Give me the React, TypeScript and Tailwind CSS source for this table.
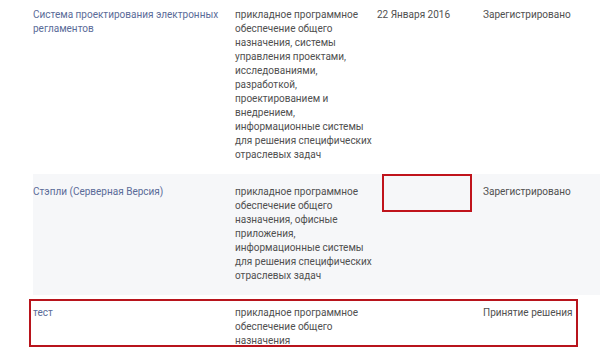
import React from 'react';

type Row = {
  name: string;
  kind: string;
  date: string;
  status: string;
  shaded?: boolean;
};

const rows: Row[] = [
  {
    name: 'Система проектирования электронных регламентов',
    kind: 'прикладное программное обеспечение общего назначения, системы управления проектами, исследованиями, разработкой, проектированием и внедрением, информационные системы для решения специфических отраслевых задач',
    date: '22 Января 2016',
    status: 'Зарегистрировано',
  },
  {
    name: 'Стэпли (Серверная Версия)',
    kind: 'прикладное программное обеспечение общего назначения, офисные приложения, информационные системы для решения специфических отраслевых задач',
    date: '',
    status: 'Зарегистрировано',
    shaded: true,
  },
  {
    name: 'тест',
    kind: 'прикладное программное обеспечение общего назначения',
    date: '',
    status: 'Принятие решения',
  },
];

const App: React.FC = () => {
  return (
    <div
      className="w-[600px] h-[356px] overflow-hidden bg-white relative"
      style={{ fontFamily: 'Roboto, "Noto Sans", sans-serif' }}
    >
      <div className="ml-[33px] -mt-[3px] text-[10px] leading-[14px] text-[#505050]">
        {rows.map((row, i) => (
          <div
            key={i}
            className={`grid grid-cols-[202px_142px_106px_1fr] pt-[11px] pb-[12px] ${row.shaded ? 'bg-[#f6f7f9]' : ''}`}
          >
            <div className="pr-3">
              <a href="#" className="text-[#5a6b98]">{row.name}</a>
            </div>
            <div className="pr-[4px]">{row.kind}</div>
            <div className="relative">
              {row.date}
              {row.shaded && (
                <div className="absolute left-[5px] -top-[11px] w-[90px] h-[38px] border-2 border-[#c0141c]" />
              )}
            </div>
            <div>{row.status}</div>
          </div>
        ))}
      </div>
      <div className="absolute left-[29px] top-[299px] w-[549px] h-[48px] border-2 border-[#b8141c]" />
    </div>
  );
};

export default App;
